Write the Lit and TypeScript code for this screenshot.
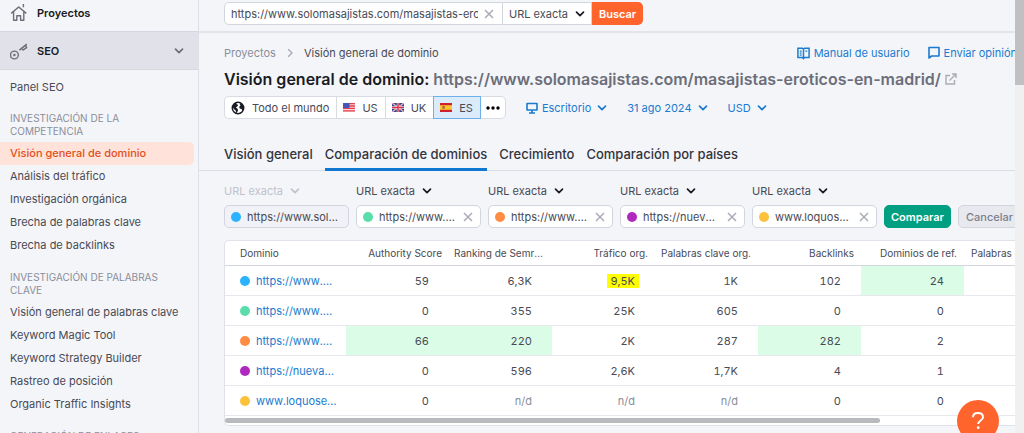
import { LitElement, html, css, svg, nothing } from "lit";
import { customElement, property } from "lit/decorators.js";
import { classMap } from "lit/directives/class-map.js";
import { styleMap } from "lit/directives/style-map.js";

const chevron = html`<svg class="chevron" viewBox="0 0 10 10" width="10" height="10" aria-hidden="true">
  <path d="M1.5 3.2 5 6.7 8.5 3.2" fill="none" stroke="currentColor" stroke-width="1.7" stroke-linecap="round" stroke-linejoin="round" />
</svg>`;

const cross = html`<svg viewBox="0 0 10 10" width="10" height="10" aria-hidden="true">
  <path d="M1 1 9 9M9 1 1 9" fill="none" stroke="#a9abb6" stroke-width="1.5" />
</svg>`;

const flags: Record<string, unknown> = {
  US: svg`<rect width="12" height="9" fill="#f6d5d8"/><path d="M0 .6h12M0 3h12M0 5.4h12M0 7.8h12" stroke="#e8404f" stroke-width="1.3"/><rect width="6.5" height="5" fill="#4a55b8"/>`,
  UK: svg`<rect width="12" height="9" fill="#2f4493"/><path d="M0 0 12 9M12 0 0 9" stroke="#fff" stroke-width="1.3"/><path d="M0 0 12 9M12 0 0 9" stroke="#d8324a" stroke-width=".6"/><path d="M6 0v9M0 4.5h12" stroke="#fff" stroke-width="2.4"/><path d="M6 0v9M0 4.5h12" stroke="#d8324a" stroke-width="1.5"/>`,
  ES: svg`<rect width="12" height="9" fill="#d0202e"/><rect y="2.2" width="12" height="4.6" fill="#fbc531"/><rect x="2.4" y="3" width="2.4" height="2.8" fill="#b5652b"/>`,
};

const colors = ["#2bb3ff", "#59ddaa", "#ff8c43", "#b029be", "#fdc23c"];

@customElement("side-nav")
export class SideNav extends LitElement {
  static styles = css`
    :host { display: block; overflow: hidden; border-right: 1px solid #dddfe6; background: #f4f5f9; }
    .top, .group { display: flex; align-items: center; box-sizing: border-box; padding: 0 10px; gap: 9px; font-size: 11px; font-weight: 600; color: #191b23; text-decoration: none; }
    .top { height: 31px; padding-bottom: 5px; }
    .group { width: 100%; height: 39px; border: 1px solid #d5d7e0; border-width: 1px 0; background: #e0e1e9; font-family: inherit; text-align: left; }
    .group .label { flex: 1; }
    .group .chevron { margin-right: 4px; color: #6c6e79; }
    .ico { color: #6c6e79; flex: none; }
    .panel { margin-top: 6px; }
    h2 { margin: 13px 10px 4px; font-size: 10px; line-height: 13px; font-weight: 400; color: #8a8e9b; text-transform: uppercase; }
    ul { margin: 0; padding: 0 0 1px; list-style: none; }
    .item { display: block; margin-right: 4px; padding-left: 10px; font-size: 11px; line-height: 23px; color: #484a54; text-decoration: none; border-radius: 0 5px 5px 0; white-space: nowrap; }
    .active { background: #ffe3da; color: #e2501c; font-weight: 500; }
  `;

  sections = [
    { title: "Investigación de la competencia", items: ["Visión general de dominio", "Análisis del tráfico", "Investigación orgánica", "Brecha de palabras clave", "Brecha de backlinks"] },
    { title: "Investigación de palabras clave", items: ["Visión general de palabras clave", "Keyword Magic Tool", "Keyword Strategy Builder", "Rastreo de posición", "Organic Traffic Insights"] },
    { title: "Generación de enlaces", items: [] },
  ];

  render() {
    return html`<nav>
      <a class="top" href="#proyectos">
        <svg class="ico" viewBox="0 0 18 18" width="18" height="18" aria-hidden="true">
          <path d="M1.200 9.400 8.700 3l7.600 6.400M3.600 8v8.200h3.200v-4.400h3.800v4.400h3.200V8M13.400 0v3.200" fill="none" stroke="currentColor" stroke-width="1.400" stroke-linejoin="round" />
        </svg>
        <span>Proyectos</span>
      </a>
      <button class="group" aria-expanded="true">
        <svg class="ico" viewBox="0 0 18 18" width="18" height="18" aria-hidden="true">
          <circle cx="4.400" cy="13" r="3.900" fill="none" stroke="currentColor" stroke-width="1.400" />
          <circle cx="4.400" cy="13" r="1.200" fill="currentColor" />
          <path d="m9.400 8.200 7.400-6M11.800 6.200l1.400 1.800 3.400-2.400-1-2" fill="none" stroke="currentColor" stroke-width="1.500" stroke-linejoin="round" />
        </svg>
        <span class="label">SEO</span>${chevron}
      </button>
      <a class="item panel" href="#panel">Panel SEO</a>
      ${this.sections.map((s) => html`<h2>${s.title}</h2>
        <ul>${s.items.map((t) => html`<li><a class=${classMap({ item: true, active: t === "Visión general de dominio" })} href="#">${t}</a></li>`)}</ul>`)}
    </nav>`;
  }
}

@customElement("url-type")
export class UrlType extends LitElement {
  static styles = css`
    :host { display: inline-grid; align-items: center; color: #484a54; }
    select, .chevron { grid-area: 1 / 1; }
    select { appearance: none; border: 0; margin: 0; padding: 0 16px 0 0; background: none; font: 400 11px/16px Inter, sans-serif; color: inherit; }
    select:disabled { opacity: 1; }
    .chevron { justify-self: end; pointer-events: none; color: #191b23; }
    :host([disabled]), :host([disabled]) .chevron { color: #c0c2cb; }
  `;
  @property({ type: Boolean, reflect: true }) disabled = false;
  render() {
    return html`<select aria-label="Tipo de URL" ?disabled=${this.disabled}><option>URL exacta</option><option>Dominio</option></select>${chevron}`;
  }
}

@customElement("compare-form")
export class CompareForm extends LitElement {
  static styles = css`
    :host { display: block; }
    form { display: flex; align-items: flex-end; gap: 7px; }
    .field { flex: none; width: 125px; display: grid; grid-template-columns: minmax(0, 1fr); gap: 6px; justify-items: start; }
    .box { box-sizing: border-box; width: 100%; height: 23px; display: flex; align-items: center; gap: 6px; padding: 0 7px 0 6px; border: 1px solid #d3d5de; border-radius: 5px; background: #fff; }
    .locked { background: #f1f2f7; }
    .dot { flex: none; width: 10px; height: 10px; border-radius: 50%; }
    input { flex: 1; min-width: 0; border: 0; padding: 0; background: none; font: 400 11px/16px Inter, sans-serif; color: #484a54; text-overflow: ellipsis; outline: 0; }
    .clear { display: flex; padding: 0; border: 0; background: none; }
    .btn { flex: none; height: 23px; padding: 0 7px; border: 1px solid #d3d5de; border-radius: 5px; font: 500 11px/16px Inter, sans-serif; background: #e8e9ef; color: #7d808c; }
    .primary { background: #009f81; border-color: #009f81; color: #fff; font-weight: 600; padding: 0 6px; }
  `;
  urls = ["https://www.solomasajistas.com/", "https://www.masajistas.com/", "https://www.masajes.com/", "https://nuevamasajistas.com/", "www.loquosex.com/masajes"];
  render() {
    return html`<form>
      ${this.urls.map((u, i) => html`<div class="field">
        <url-type ?disabled=${i === 0}></url-type>
        <div class=${classMap({ box: true, locked: i === 0 })}>
          <span class="dot" style=${styleMap({ background: colors[i] })}></span>
          <input type="text" aria-label="Dominio ${i + 1}" .value=${u} ?readonly=${i === 0} />
          ${i ? html`<button type="button" class="clear" aria-label="Borrar">${cross}</button>` : nothing}
        </div>
      </div>`)}
      <button type="button" class="btn primary">Comparar</button>
      <button type="button" class="btn">Cancelar</button>
    </form>`;
  }
}

@customElement("domain-table")
export class DomainTable extends LitElement {
  static styles = css`
    :host { display: block; overflow: hidden; background: #fff; border: 1px solid #e0e2e9; border-right: 0; border-radius: 5px 0 0 5px; }
    table { width: 842px; table-layout: fixed; border-collapse: separate; border-spacing: 0; color: #484a54; }
    .first { width: 121px; }
    th, td { box-sizing: border-box; border-bottom: 1px solid #e6e8ee; white-space: nowrap; overflow: hidden; text-overflow: ellipsis; }
    th { height: 25px; padding: 0 7px 0 5px; font-size: 10px; line-height: 14px; font-weight: 400; text-align: right; border-color: #d3d5de; }
    th:last-child { padding-left: 7px; }
    th.first { text-align: left; padding-left: 15px; }
    td { height: 30px; padding: 0 20px 0 7px; font-size: 11px; line-height: 16px; text-align: right; font-variant-numeric: tabular-nums; }
    td.first { padding: 0 7px 0 15px; }
    .name { display: flex; align-items: center; gap: 6px; }
    .dot { flex: none; width: 10px; height: 10px; border-radius: 50%; }
    .name a { min-width: 0; overflow: hidden; text-overflow: ellipsis; color: #1a7bcf; text-decoration: none; }
    .best { background: #dbfde7; }
    .na { color: #8a8e9b; }
    mark { background: #ffff00; color: inherit; padding: 0 4px 0 3px; margin-right: -4px; }
    .scroll { padding: 2px 0; }
    .thumb { height: 5px; width: 655px; border-radius: 3px; background: #b9babd; }
  `;
  heads = ["Authority Score", "Ranking de Semrush", "Tráfico org.", "Palabras clave org.", "Backlinks", "Dominios de ref.", "Palabras clave de pago"];
  rows: { name: string; values: string[]; best?: number[]; mark?: number }[] = [
    { name: "https://www.masajistas.es", values: ["59", "6,3K", "9,5K", "1K", "102", "24"], best: [5], mark: 2 },
    { name: "https://www.masajistas.com", values: ["0", "355", "25K", "605", "0", "0"] },
    { name: "https://www.masajes.com", values: ["66", "220", "2K", "287", "282", "2"], best: [0, 1, 4] },
    { name: "https://nuevamasajistas.com", values: ["0", "596", "2,6K", "1,7K", "4", "1"] },
    { name: "www.loquosex.com", values: ["0", "n/d", "n/d", "n/d", "0", "0"] },
  ];
  render() {
    return html`<table>
        <thead><tr><th class="first" scope="col">Dominio</th>${this.heads.map((h) => html`<th scope="col">${h}</th>`)}</tr></thead>
        <tbody>${this.rows.map((r, i) => html`<tr>
          <td class="first"><div class="name"><span class="dot" style=${styleMap({ background: colors[i] })}></span><a href="#">${r.name}</a></div></td>
          ${r.values.map((v, j) => html`<td class=${classMap({ best: !!r.best?.includes(j), na: v === "n/d" })}>${r.mark === j ? html`<mark>${v}</mark>` : v}</td>`)}
          <td></td>
        </tr>`)}</tbody>
      </table>
      <div class="scroll"><div class="thumb"></div></div>`;
  }
}

@customElement("app-root")
export class AppRoot extends LitElement {
  static styles = css`
    :host { display: grid; grid-template-columns: 199px minmax(0, 1fr) 9px; height: 100vh; overflow: hidden; background: #f4f5f9; font-family: Inter, sans-serif; font-size: 11px; line-height: 16px; color: #484a54; }
    button, input { font: inherit; color: inherit; }
    a { text-decoration: none; color: inherit; }
    main { overflow: hidden; }
    .pad { padding-left: 25px; }
    .search { display: flex; box-sizing: border-box; height: 33px; padding-top: 2px; border-bottom: 2px solid #e2e4ea; }
    .query, .kind { display: flex; align-items: center; box-sizing: border-box; height: 23px; border: 1px solid #d3d5de; background: #fff; }
    .query { width: 279px; padding: 0 8px 0 6px; gap: 6px; border-radius: 5px 0 0 5px; }
    .query input { flex: 1; min-width: 0; padding: 0; border: 0; background: none; outline: 0; }
    .clear { display: flex; padding: 0; border: 0; background: none; }
    .kind { padding: 0 6px; border-left: 0; }
    .go { height: 23px; padding: 0 7px; border: 0; border-radius: 0 5px 5px 0; background: #ff642d; color: #fff; font-weight: 600; }
    .crumbs { display: flex; align-items: center; gap: 9px; padding-top: 12px; }
    .crumbs .home { color: #8a8e9b; }
    .crumbs .sep { color: #a9abb6; }
    .links { margin-left: auto; display: flex; gap: 18px; margin-right: -2px; white-space: nowrap; }
    .links a, .filter { display: flex; align-items: center; gap: 4px; color: #1a7bcf; }
    h1 { display: flex; align-items: center; gap: 4px; margin: 7px 0 0; font-size: 16px; line-height: 22px; font-weight: 600; color: #191b23; white-space: nowrap; }
    h1 .url { color: #6c6e79; }
    .filters { display: flex; align-items: center; margin-top: 6px; gap: 20px; }
    .countries { display: flex; }
    .countries button { display: flex; align-items: center; gap: 7px; height: 23px; padding: 0 7px 0 6px; border: 1px solid #d9dbe3; border-right-width: 0; background: #fff; }
    .countries button:first-child { border-radius: 5px 0 0 5px; }
    .countries button:last-child { border-radius: 0 5px 5px 0; border-width: 1px 1px 1px 0; padding: 0 5px; color: #191b23; }
    .countries .on { background: #dcebfa; border: 1px solid #6cb1ea; }
    .filter { padding: 0; border: 0; background: none; }
    .filter .chevron { margin-left: 2px; }
    .tabs { display: flex; gap: 12px; margin-top: 25px; border-bottom: 1px solid #dcdee6; font-size: 13px; font-weight: 500; line-height: 20px; color: #32343d; }
    .tabs a { padding-bottom: 6px; }
    .tabs .current { border-bottom: 3px solid #1078d1; margin-bottom: -1px; padding-bottom: 4px; }
    compare-form { margin-top: 12px; }
    domain-table { margin-top: 12px; }
    .track { background: #f0f0f1; }
    .grip { height: 85px; background: #c0c0c2; }
    .help { position: fixed; right: 25px; bottom: -9px; width: 42px; height: 42px; padding: 0; border: 0; border-radius: 50%; background: #ff642d; display: grid; place-items: center; }
  `;

  render() {
    return html`
      <side-nav></side-nav>
      <main>
        <form class="search pad">
          <div class="query">
            <input type="text" aria-label="Dominio o URL" value="https://www.solomasajistas.com/masajistas-eroticos-en-madrid/" />
            <button type="button" class="clear" aria-label="Borrar">${cross}</button>
          </div>
          <div class="kind"><url-type></url-type></div>
          <button type="button" class="go">Buscar</button>
        </form>
        <div class="crumbs pad">
          <a class="home" href="#">Proyectos</a>
          <svg class="sep" viewBox="0 0 10 10" width="10" height="10" aria-hidden="true"><path d="m3.200 1.200 3.800 3.800-3.800 3.800" fill="none" stroke="currentColor" stroke-width="1.400" /></svg>
          <span>Visión general de dominio</span>
          <div class="links">
            <a href="#manual"><svg viewBox="0 0 14 14" width="13" height="13" aria-hidden="true"><path d="M7 2.200v10.600M7 2.500 5.800 1.400H1v10h4.800L7 12.600l1.200-1.200H13v-10H8.200z" fill="none" stroke="currentColor" stroke-width="1.600" /><path d="M3 4.400h2M3 6.600h2M3 8.800h2M9 4.400h2" stroke="currentColor" stroke-width="1.200" /></svg>Manual de usuario</a>
            <a href="#opinion"><svg viewBox="0 0 12 14" width="12" height="14" aria-hidden="true"><path d="M1 12V1.500h10v8.500H3.600z" fill="none" stroke="currentColor" stroke-width="1.600" stroke-linejoin="round" /></svg>Enviar opinión</a>
          </div>
        </div>
        <h1 class="pad"><span>Visión general de dominio: <a class="url" href="#">https://www.solomasajistas.com/masajistas-eroticos-en-madrid/</a></span>
          <svg viewBox="0 0 12 12" width="12" height="12" aria-hidden="true"><path d="M5 2.500H1v8.500h8.500V7M7 1h4v4M11 1 4.500 7.500" fill="none" stroke="#a9abb6" stroke-width="1.400" /></svg></h1>
        <div class="filters pad">
          <div class="countries">
            <button><svg viewBox="0 0 14 14" width="14" height="14" aria-hidden="true"><circle cx="7" cy="7" r="5.700" fill="#fff" stroke="#191b23" stroke-width="1.500" /><path d="M1.500 5 3.300 2.300 6 1.500 5.400 3 7.200 4 6 5.800 4.800 6.600 6.600 7.800 7 9.600 5.600 12.400 4.600 9.600 2.600 7.800zM8.400 2.600l1.800-.4L12.600 5l.3 2.600-1.400 2.600-.9-2.200-1.900-.6-.6-1.600 1.400-1z" fill="#191b23" /></svg>Todo el mundo</button>
            ${["US", "UK", "ES"].map((c) => html`<button class=${classMap({ on: c === "ES" })}><svg viewBox="0 0 12 9" width="12" height="9" aria-hidden="true">${flags[c]}</svg>${c}</button>`)}
            <button aria-label="Más países"><svg viewBox="0 0 14 4" width="14" height="4" aria-hidden="true"><circle cx="2" cy="2" r="1.700" /><circle cx="7" cy="2" r="1.700" /><circle cx="12" cy="2" r="1.700" /></svg></button>
          </div>
          <button class="filter"><svg viewBox="0 0 12 12" width="12" height="12" aria-hidden="true"><path d="M1 1.500h10v6.500H1zM6 8v3M3 11h6" fill="none" stroke="currentColor" stroke-width="1.600" stroke-linejoin="round" /></svg>Escritorio ${chevron}</button>
          <button class="filter">31 ago 2024 ${chevron}</button>
          <button class="filter">USD ${chevron}</button>
        </div>
        <nav class="tabs pad">
          <a href="#">Visión general</a><a class="current" href="#" aria-current="page">Comparación de dominios</a><a href="#">Crecimiento</a><a href="#">Comparación por países</a>
        </nav>
        <div class="pad">
          <compare-form></compare-form>
          <domain-table></domain-table>
        </div>
      </main>
      <div class="track"><div class="grip"></div></div>
      <button class="help" aria-label="Ayuda"><svg viewBox="0 0 14 20" width="14" height="20" aria-hidden="true"><path d="M2 6.200C2 3.400 4.200 2 7 2s5 1.500 5 4.200c0 3.300-4.800 3.300-4.800 6.800" fill="none" stroke="#fff" stroke-width="2" /><circle cx="7.200" cy="16.700" r="1.400" fill="#fff" /></svg></button>`;
  }
}
